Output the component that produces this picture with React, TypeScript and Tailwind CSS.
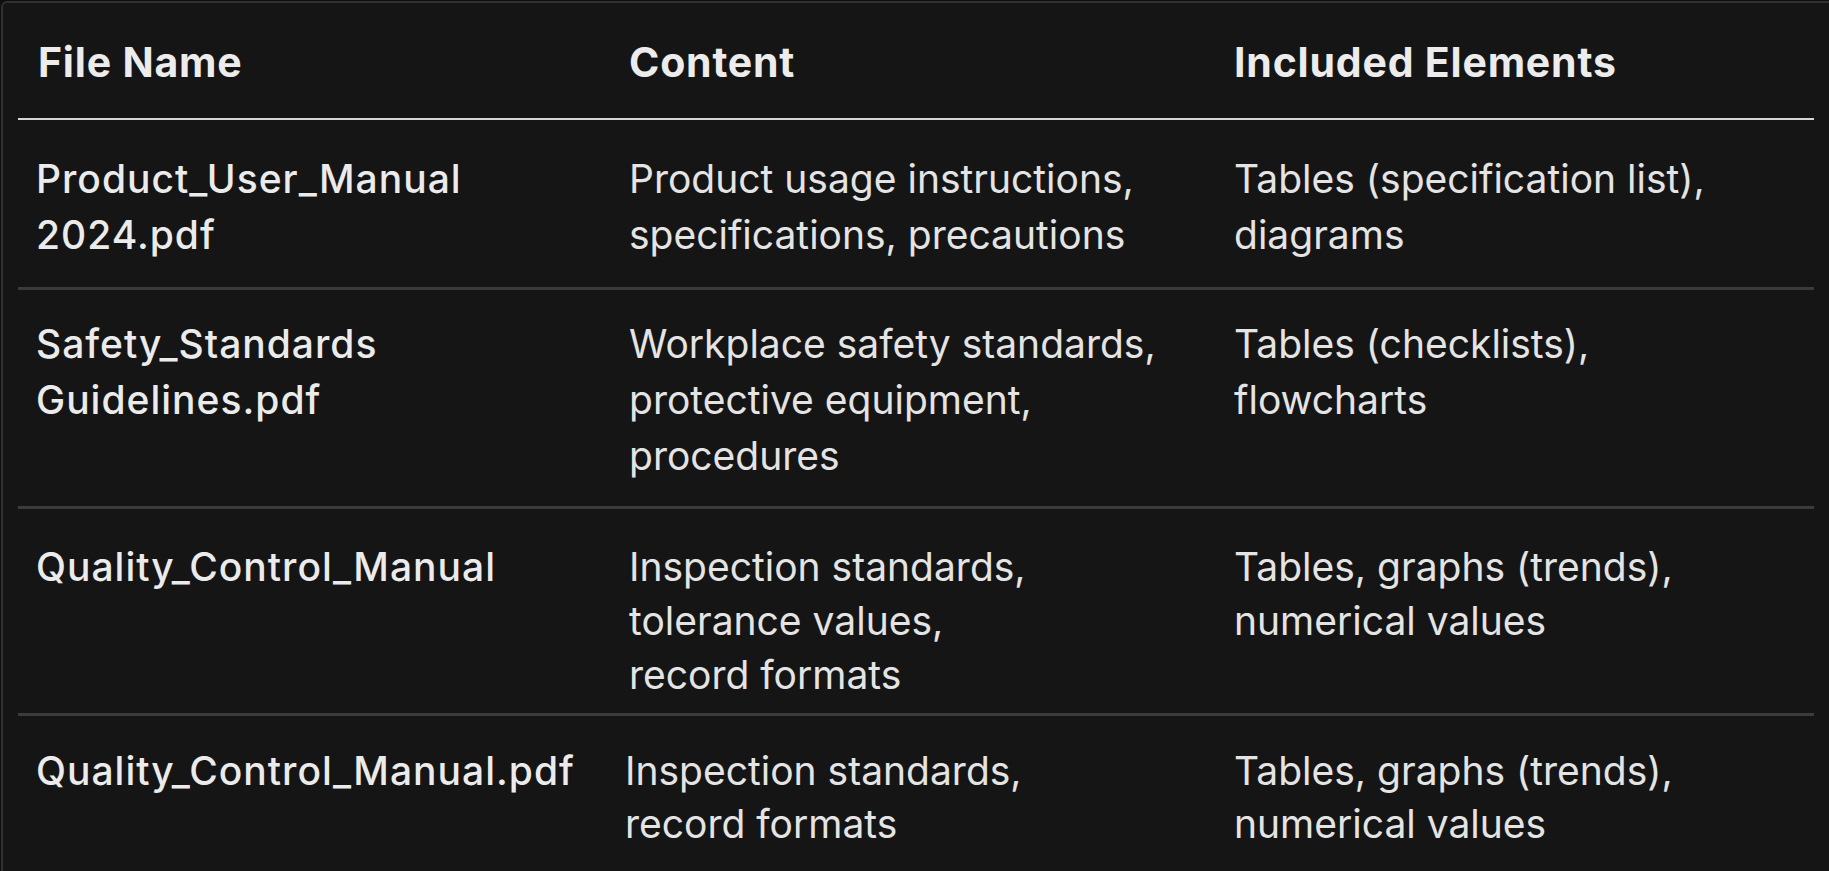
import React from 'react';

type Row = {
  file: string[];
  content: string[];
  elements: string[];
  pad: string;
  leading: string;
  contentPad?: string;
};

const rows: Row[] = [
  {
    file: ['Product_User_Manual', '2024.pdf'],
    content: ['Product usage instructions,', 'specifications, precautions'],
    elements: ['Tables (specification list),', 'diagrams'],
    pad: 'pt-[31px] pb-[24px]',
    leading: 'leading-[56px]',
  },
  {
    file: ['Safety_Standards', 'Guidelines.pdf'],
    content: ['Workplace safety standards,', 'protective equipment,', 'procedures'],
    elements: ['Tables (checklists),', 'flowcharts'],
    pad: 'pt-[26px] pb-[22px]',
    leading: 'leading-[56px]',
  },
  {
    file: ['Quality_Control_Manual'],
    content: ['Inspection standards,', 'tolerance values,', 'record formats'],
    elements: ['Tables, graphs (trends),', 'numerical values'],
    pad: 'pt-[31px] pb-[11px]',
    leading: 'leading-[54px]',
  },
  {
    file: ['Quality_Control_Manual.pdf'],
    content: ['Inspection standards,', 'record formats'],
    elements: ['Tables, graphs (trends),', 'numerical values'],
    pad: 'pt-[28px] pb-[28px]',
    leading: 'leading-[53px]',
    contentPad: 'pl-4',
  },
];

const Lines: React.FC<{ lines: string[] }> = ({ lines }) => (
  <>
    {lines.map((l) => (
      <div key={l} className="whitespace-nowrap">
        {l}
      </div>
    ))}
  </>
);

export default function App() {
  return (
    <div className="min-h-screen w-full bg-[#0e0e0e] font-['Inter','Liberation_Sans',sans-serif] overflow-hidden">
      <div className="min-h-screen ml-px mt-px bg-[#151515] border-l-2 border-t-2 border-[#303030] rounded-tl-md px-[15px]">
        {/* header */}
        <div className="grid grid-cols-[591px_605px_605px] border-b-2 border-[#d6d6d6] pt-[31px] pb-[28px] text-[41px] leading-[56px] font-bold text-[#ececec] tracking-[0.8px]">
          <div className="pl-5">File Name</div>
          <div className="pl-5">Content</div>
          <div className="pl-5">Included Elements</div>
        </div>

        {/* body rows */}
        {rows.map((r, i) => (
          <div
            key={i}
            className={`grid grid-cols-[591px_605px_605px] text-[39px] text-[#e4e4e4] ${r.pad} ${r.leading} ${
              i < rows.length - 1 ? 'border-b-[3px] border-[#3b3b3b]' : ''
            }`}
          >
            <div className="pl-[18px] font-medium tracking-[1px] text-[#ebebeb]">
              <Lines lines={r.file} />
            </div>
            <div className={`${r.contentPad ?? 'pl-5'} font-normal`}>
              <Lines lines={r.content} />
            </div>
            <div className="pl-5 font-normal">
              <Lines lines={r.elements} />
            </div>
          </div>
        ))}
      </div>
    </div>
  );
}
